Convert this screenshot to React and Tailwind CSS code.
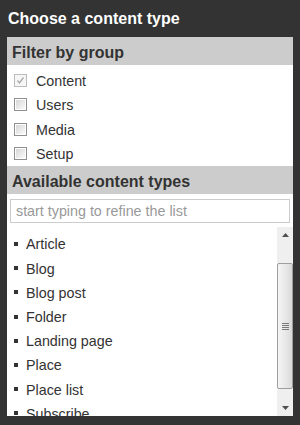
import React from 'react';

const groups = [
  { label: "Content", checked: true, disabled: true },
  { label: "Users" },
  { label: "Media" },
  { label: "Setup" },
];

const types = ["Article", "Blog", "Blog post", "Folder", "Landing page", "Place", "Place list", "Subscribe"];

function Checkbox({ checked, disabled }) {
  if (disabled) {
    return (
      <span className="w-[13px] h-[13px] border border-[#bcbcbc] bg-[#f6f6f6] flex items-center justify-center shrink-0">
        <svg width="9" height="9" viewBox="0 0 9 9">
          <path d="M1.5 4.5 L3.5 7 L7.5 1.5" fill="none" stroke="#a8a8a8" strokeWidth="1.3" />
        </svg>
      </span>
    );
  }
  return (
    <span className="w-[13px] h-[13px] border border-[#8e8f8f] p-[1px] bg-white shrink-0 flex">
      <span className="flex-1 bg-gradient-to-br from-[#d6d6d6] to-[#fbfbfb]" />
    </span>
  );
}

function Scrollbar() {
  return (
    <div className="w-[16px] shrink-0 bg-[#efefef] flex flex-col">
      <div className="h-[16px] flex items-center justify-center">
        <svg width="7" height="4" viewBox="0 0 7 4"><path d="M0 4 L3.5 0 L7 4 Z" fill="#505050" /></svg>
      </div>
      <div className="mt-[20px] h-[126px] rounded-[2px] border border-[#9e9e9e] bg-gradient-to-r from-[#f5f5f5] via-[#e9e9e9] to-[#d9d9d9] flex items-center justify-center">
        <div className="flex flex-col gap-[1px]">
          <span className="w-[7px] h-[1px] bg-[#7a7a7a]" />
          <span className="w-[7px] h-[1px] bg-[#7a7a7a]" />
          <span className="w-[7px] h-[1px] bg-[#7a7a7a]" />
          <span className="w-[7px] h-[1px] bg-[#7a7a7a]" />
        </div>
      </div>
      <div className="flex-1" />
      <div className="h-[16px] flex items-center justify-center">
        <svg width="7" height="4" viewBox="0 0 7 4"><path d="M0 0 L7 0 L3.5 4 Z" fill="#505050" /></svg>
      </div>
    </div>
  );
}

export default function App() {
  return (
    <div className="w-[300px] h-[425px] bg-[#333333] px-[7px] pb-[9px] flex flex-col overflow-hidden font-['Liberation_Sans',Arial,sans-serif]">
      {/* TITLE */}
      <div className="h-[37px] pt-[10px] pl-[1px] text-white font-bold text-[16px] leading-[18px] shrink-0">
        Choose a content type
      </div>

      {/* PANEL */}
      <div className="flex-1 bg-white flex flex-col min-h-0">
        <div className="h-[28px] bg-[#cccccc] flex items-center pt-[3px] pl-[5px] text-[#333333] font-bold text-[16px] shrink-0">
          Filter by group
        </div>
        <div className="pt-[3px] shrink-0">
          {groups.map(g => (
            <div key={g.label} className="h-[24.5px] flex items-center pl-[7px] gap-[9px] text-[14.3px] text-[#333333]">
              <Checkbox checked={g.checked} disabled={g.disabled} />
              <span className="pt-[2px]">{g.label}</span>
            </div>
          ))}
        </div>

        <div className="h-[28px] bg-[#cccccc] flex items-center pt-[3px] pl-[5px] text-[#333333] font-bold text-[16px] shrink-0">
          Available content types
        </div>
        <div className="mx-[3px] mt-[5px] h-[24px] border border-[#cccccc] flex items-center pt-[2px] pl-[5px] text-[14.3px] text-[#999999] shrink-0">
          start typing to refine the list
        </div>

        {/* LIST */}
        <div className="mt-[4px] flex-1 flex min-h-0">
          <div className="flex-1 overflow-hidden pt-[5px]">
            {types.map(t => (
              <div key={t} className="h-[24.2px] flex items-center pl-[7px] gap-[8px] text-[14.3px] text-[#333333]">
                <span className="w-[4px] h-[4px] bg-[#333333] shrink-0" />
                <span className="pt-[2px]">{t}</span>
              </div>
            ))}
          </div>
          <Scrollbar />
        </div>
      </div>
    </div>
  );
}
